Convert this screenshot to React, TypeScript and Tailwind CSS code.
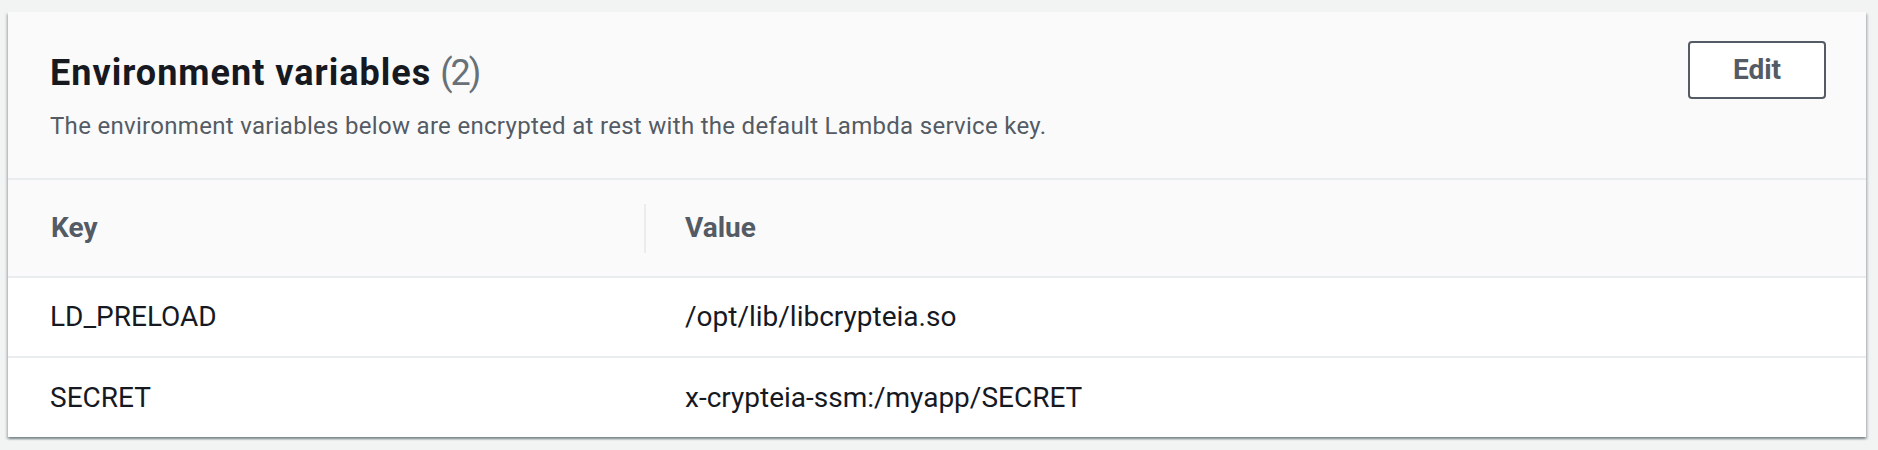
import React from "react";

const rows = [
  { key: "LD_PRELOAD", value: "/opt/lib/libcrypteia.so" },
  { key: "SECRET", value: "x-crypteia-ssm:/myapp/SECRET" },
];

export default function App() {
  return (
    <div
      className="w-[1878px] h-[450px] bg-[#f2f3f3] pt-[12px] pl-[8px] pr-[12px]"
      style={{ fontFamily: 'Roboto, "Liberation Sans", sans-serif' }}
    >
      <div className="bg-white shadow-[0_2px_2px_0_rgba(0,28,36,0.3),2px_2px_2px_0_rgba(0,28,36,0.15),-2px_2px_2px_0_rgba(0,28,36,0.15)]">
        {/* Header */}
        <div className="flex justify-between bg-[#fafafa] border-b-2 border-[#eaeded] pl-[42px] pr-[40px] pt-[39px] pb-[36px]">
          <div>
            <h2 className="text-[36px] leading-[44px] font-bold text-[#16191f] tracking-[1px]">
              Environment variables
              <span className="ml-[9px] font-normal text-[#687078] tracking-[-2px]">(2)</span>
            </h2>
            <p className="mt-[15px] text-[24px] leading-[32px] text-[#545b64] tracking-[0.3px]">
              The environment variables below are encrypted at rest with the default Lambda service key.
            </p>
          </div>
          <button className="mt-[-10px] w-[138px] h-[58px] rounded-[4px] border-2 border-[#545b64] bg-white text-[28px] font-bold text-[#545b64] flex items-center justify-center">
            Edit
          </button>
        </div>
        {/* Table head */}
        <div className="flex items-center h-[98px] bg-[#fafafa] border-b-2 border-[#eaeded] text-[28px] leading-[42px] font-bold text-[#545b64]">
          <div className="w-[636px] pl-[43px]">Key</div>
          <div className="w-[2px] h-[49px] bg-[#eaeded]" />
          <div className="pl-[39px]">Value</div>
        </div>
        {/* Rows */}
        {rows.map((r, i) => (
          <div
            key={r.key}
            className={`flex items-center text-[28px] leading-[42px] text-[#16191f] ${i < rows.length - 1 ? "h-[80px] border-b-2 border-[#eaeded]" : "h-[79px]"}`}
          >
            <div className="w-[638px] pl-[42px]">{r.key}</div>
            <div className="pl-[39px]">{r.value}</div>
          </div>
        ))}
      </div>
    </div>
  );
}
